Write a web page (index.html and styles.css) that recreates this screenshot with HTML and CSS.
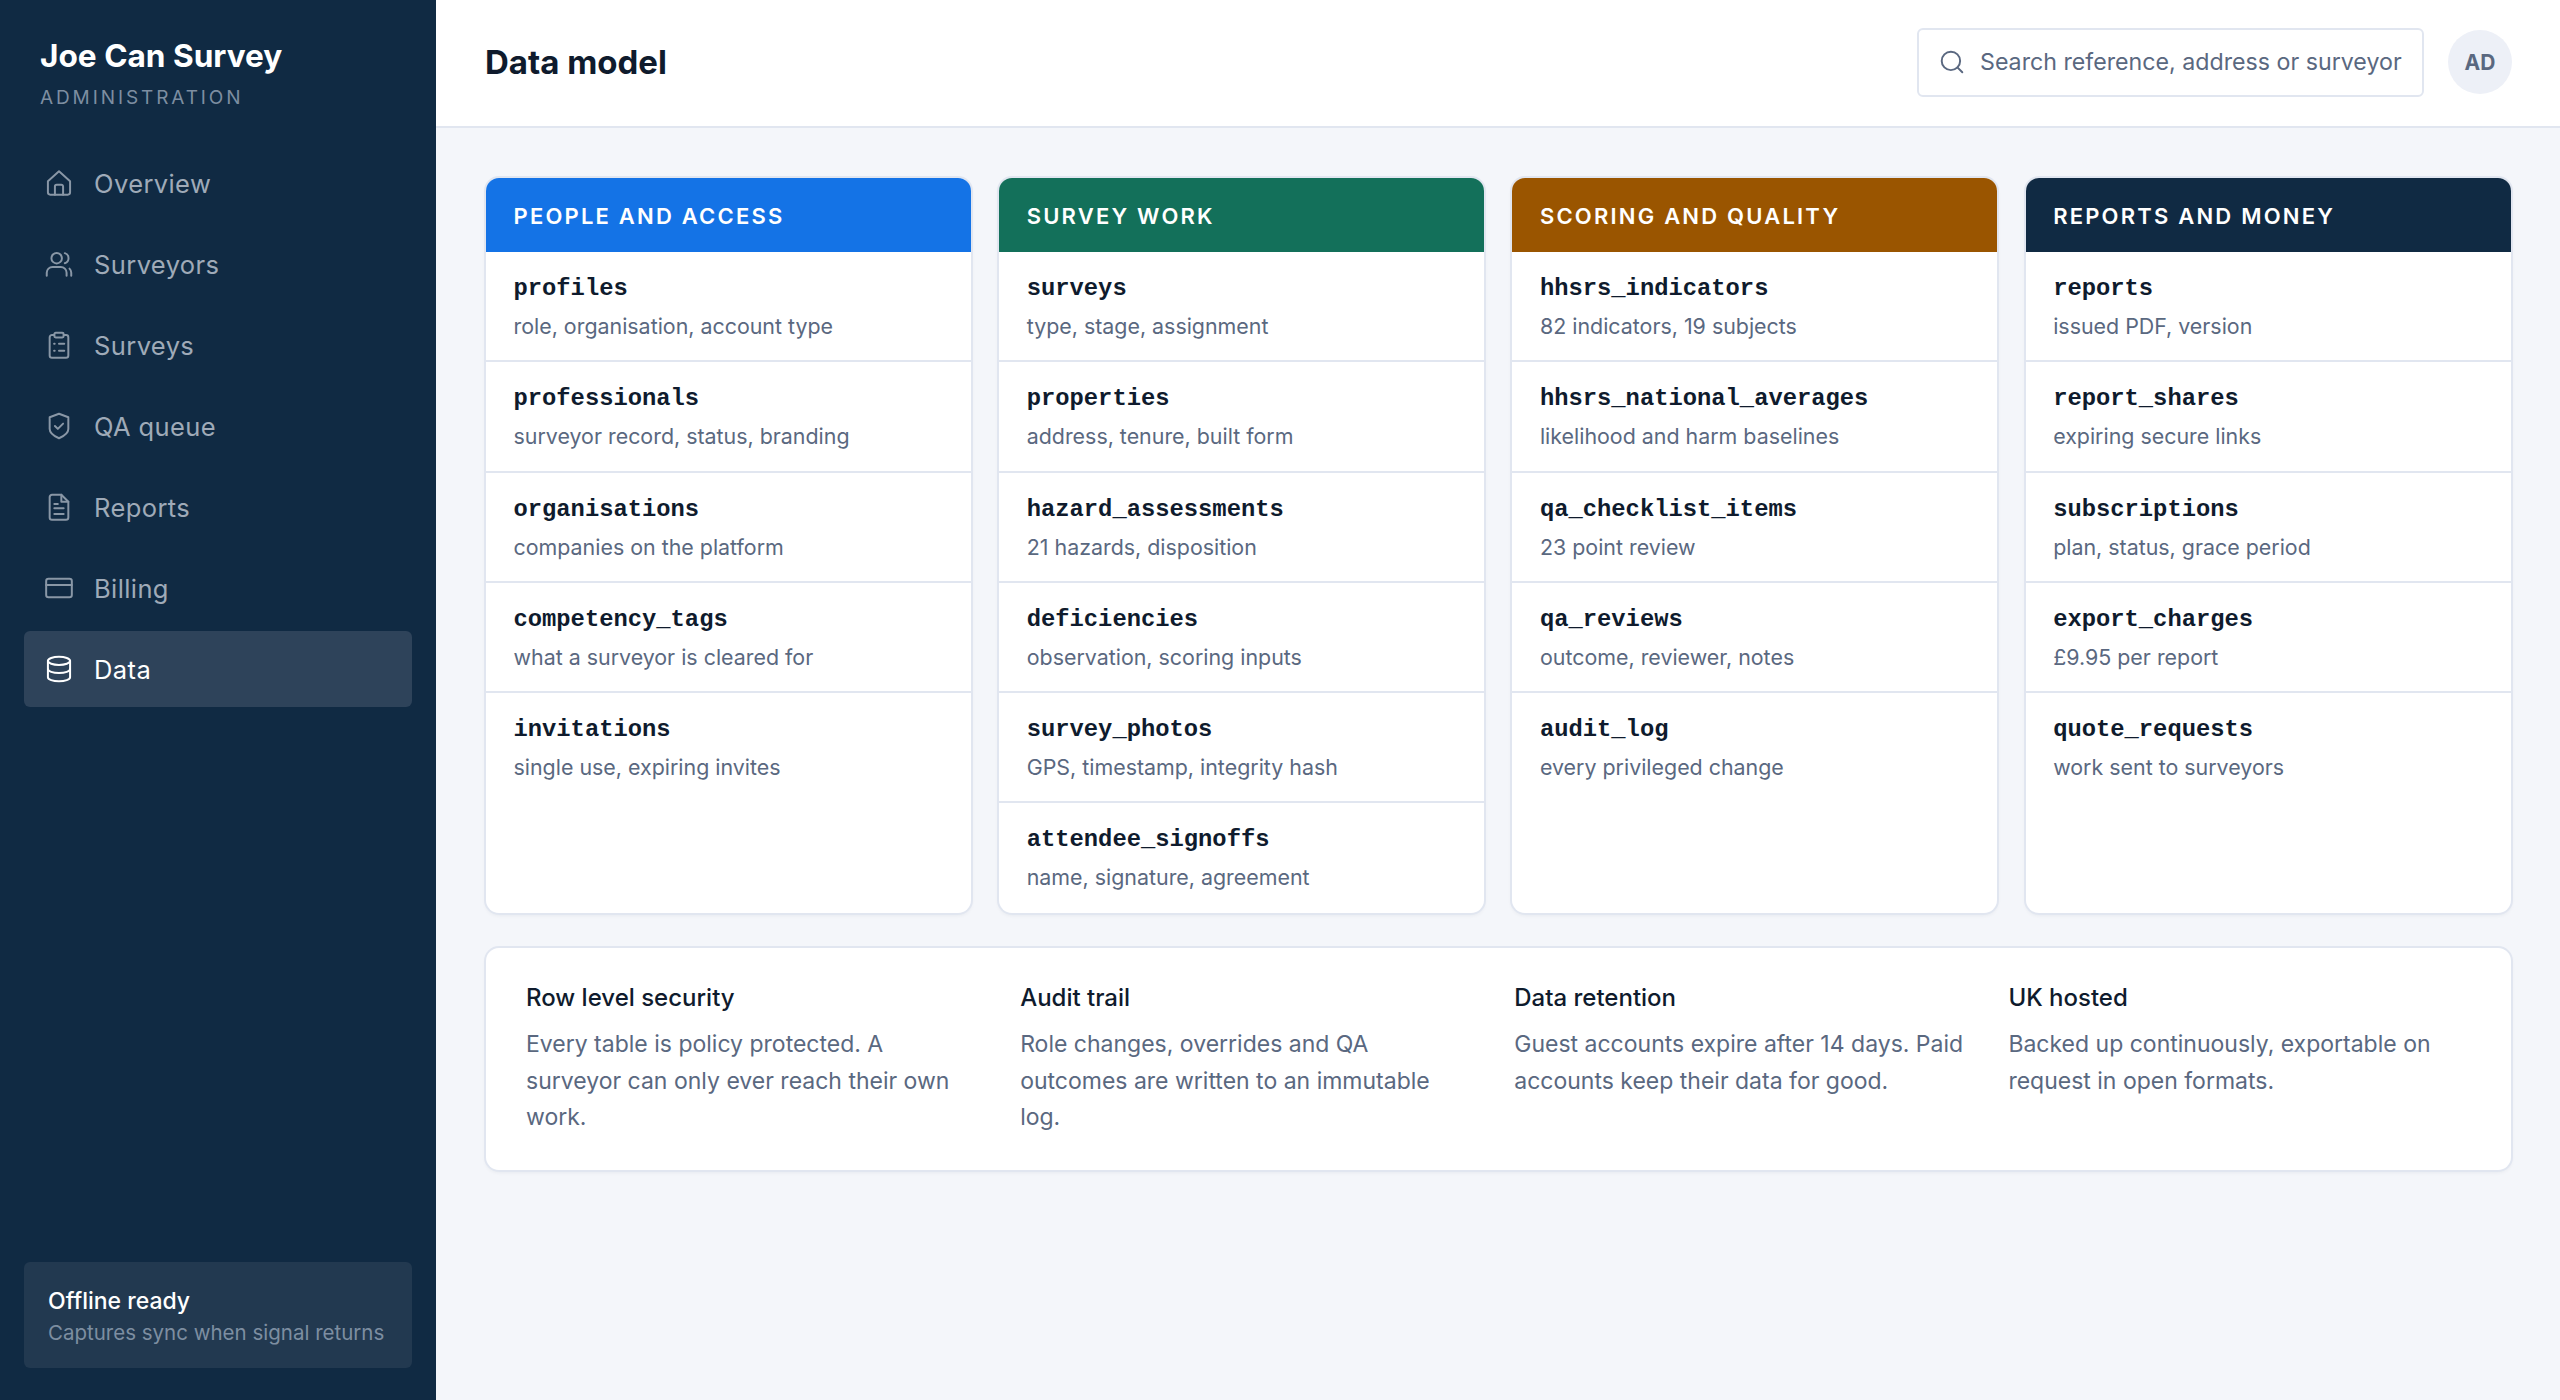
FILE: index.html
```html
<!DOCTYPE html>
<html lang="en">
<head>
    <meta charset="UTF-8">
    <title>Data model</title>
    <link rel="stylesheet" href="styles.css">
</head>
<body>
    <svg width="0" height="0" class="icon-defs">
        <symbol id="i-home" viewBox="0 0 24 24"><path d="M2.500 10.500 12 2l9.500 8.500V20a2 2 0 0 1-2 2h-15a2 2 0 0 1-2-2z"/><path d="M8.500 22v-7a1.500 1.500 0 0 1 1.500-1.500h4a1.500 1.500 0 0 1 1.500 1.500v7"/></symbol>
        <symbol id="i-users" viewBox="0 0 24 24"><circle cx="10" cy="7" r="4.500"/><path d="M1.500 22v-2.500a5 5 0 0 1 5-5h7a5 5 0 0 1 5 5V22"/><path d="M17 2.700a4.500 4.500 0 0 1 0 8.600"/><path d="M22.500 22v-2.500a5 5 0 0 0-1.500-3.500"/></symbol>
        <symbol id="i-clipboard" viewBox="0 0 24 24"><rect x="8" y="1.500" width="8" height="4" rx="1.200"/><path d="M16 3.500h2a2 2 0 0 1 2 2V21a2 2 0 0 1-2 2H6a2 2 0 0 1-2-2V5.500a2 2 0 0 1 2-2h2"/><path d="M12 11h4.500M12 17h4.500M7.800 11h.5M7.800 17h.5"/></symbol>
        <symbol id="i-shield" viewBox="0 0 24 24"><path d="M12 1.500 20 4.500v10c0 3-3.500 6-8 8-4.500-2-8-5-8-8v-10z"/><path d="m8.500 12 2.500 2.500 4.500-4.500"/></symbol>
        <symbol id="i-file" viewBox="0 0 24 24"><path d="M14 1.500H6a2 2 0 0 0-2 2V21a2 2 0 0 0 2 2h12a2 2 0 0 0 2-2V7.500z"/><path d="M14 1.500v6h6"/><path d="M8 13h8M8 18h8M8 9.500h3"/></symbol>
        <symbol id="i-card" viewBox="0 0 24 24"><rect x="1" y="4" width="22" height="16" rx="2"/><path d="M1 9.500h22"/></symbol>
        <symbol id="i-database" viewBox="0 0 24 24"><ellipse cx="12" cy="5" rx="9.500" ry="3.500"/><path d="M2.500 5v14c0 2 4.300 3.500 9.500 3.500s9.500-1.500 9.500-3.500V5"/><path d="M2.500 12c0 2 4.300 3.500 9.500 3.500s9.500-1.500 9.500-3.500"/></symbol>
        <symbol id="i-search" viewBox="0 0 24 24"><circle cx="11" cy="11" r="8.500"/><path d="m21.500 21.500-4.500-4.500"/></symbol>
    </svg>

    <div class="app">
        <!-- Sidebar -->
        <aside class="sidebar">
            <div class="brand">
                <div class="brand-name">Joe Can Survey</div>
                <div class="brand-sub">ADMINISTRATION</div>
            </div>
            <nav class="nav">
                <a class="nav-item"><svg class="icon"><use href="#i-home"/></svg>Overview</a>
                <a class="nav-item"><svg class="icon"><use href="#i-users"/></svg>Surveyors</a>
                <a class="nav-item"><svg class="icon"><use href="#i-clipboard"/></svg>Surveys</a>
                <a class="nav-item"><svg class="icon"><use href="#i-shield"/></svg>QA queue</a>
                <a class="nav-item"><svg class="icon"><use href="#i-file"/></svg>Reports</a>
                <a class="nav-item"><svg class="icon"><use href="#i-card"/></svg>Billing</a>
                <a class="nav-item active"><svg class="icon"><use href="#i-database"/></svg>Data</a>
            </nav>
            <div class="offline">
                <div class="offline-title">Offline ready</div>
                <div class="offline-sub">Captures sync when signal returns</div>
            </div>
        </aside>

        <div class="main">
            <!-- Top bar -->
            <header class="topbar">
                <h1>Data model</h1>
                <div class="topbar-right">
                    <div class="search">
                        <svg class="search-icon"><use href="#i-search"/></svg>
                        <span>Search reference, address or surveyor</span>
                    </div>
                    <div class="avatar">AD</div>
                </div>
            </header>

            <div class="content">
                <!-- Table groups -->
                <div class="groups">
                    <section class="group">
                        <h2 class="group-head blue">PEOPLE AND ACCESS</h2>
                        <div class="row"><code>profiles</code><p>role, organisation, account type</p></div>
                        <div class="row"><code>professionals</code><p>surveyor record, status, branding</p></div>
                        <div class="row"><code>organisations</code><p>companies on the platform</p></div>
                        <div class="row"><code>competency_tags</code><p>what a surveyor is cleared for</p></div>
                        <div class="row"><code>invitations</code><p>single use, expiring invites</p></div>
                    </section>
                    <section class="group">
                        <h2 class="group-head green">SURVEY WORK</h2>
                        <div class="row"><code>surveys</code><p>type, stage, assignment</p></div>
                        <div class="row"><code>properties</code><p>address, tenure, built form</p></div>
                        <div class="row"><code>hazard_assessments</code><p>21 hazards, disposition</p></div>
                        <div class="row"><code>deficiencies</code><p>observation, scoring inputs</p></div>
                        <div class="row"><code>survey_photos</code><p>GPS, timestamp, integrity hash</p></div>
                        <div class="row"><code>attendee_signoffs</code><p>name, signature, agreement</p></div>
                    </section>
                    <section class="group">
                        <h2 class="group-head amber">SCORING AND QUALITY</h2>
                        <div class="row"><code>hhsrs_indicators</code><p>82 indicators, 19 subjects</p></div>
                        <div class="row"><code>hhsrs_national_averages</code><p>likelihood and harm baselines</p></div>
                        <div class="row"><code>qa_checklist_items</code><p>23 point review</p></div>
                        <div class="row"><code>qa_reviews</code><p>outcome, reviewer, notes</p></div>
                        <div class="row"><code>audit_log</code><p>every privileged change</p></div>
                    </section>
                    <section class="group">
                        <h2 class="group-head navy">REPORTS AND MONEY</h2>
                        <div class="row"><code>reports</code><p>issued PDF, version</p></div>
                        <div class="row"><code>report_shares</code><p>expiring secure links</p></div>
                        <div class="row"><code>subscriptions</code><p>plan, status, grace period</p></div>
                        <div class="row"><code>export_charges</code><p>£9.95 per report</p></div>
                        <div class="row"><code>quote_requests</code><p>work sent to surveyors</p></div>
                    </section>
                </div>

                <!-- Notes -->
                <div class="notes">
                    <div class="note">
                        <h3>Row level security</h3>
                        <p>Every table is policy protected. A surveyor can only ever reach their own work.</p>
                    </div>
                    <div class="note">
                        <h3>Audit trail</h3>
                        <p>Role changes, overrides and QA outcomes are written to an immutable log.</p>
                    </div>
                    <div class="note">
                        <h3>Data retention</h3>
                        <p>Guest accounts expire after 14 days. Paid accounts keep their data for good.</p>
                    </div>
                    <div class="note">
                        <h3>UK hosted</h3>
                        <p>Backed up continuously, exportable on request in open formats.</p>
                    </div>
                </div>
            </div>
        </div>
    </div>
</body>
</html>
```

FILE: styles.css
```css
* {
    box-sizing: border-box;
}
html, body {
    height: 100%;
}
body {
    margin: 0;
    font-family: Inter, "Noto Sans", sans-serif;
    background-color: #f4f6fa;
    color: #0f1b2d;
}
.icon-defs {
    position: absolute;
}
.app {
    display: flex;
    height: 1400px;
}

/* Sidebar */
.sidebar {
    width: 436px;
    flex: none;
    background-color: #102a43;
    display: flex;
    flex-direction: column;
    padding: 0 24px 32px;
}
.brand {
    padding: 37px 16px 0;
    height: 145px;
}
.brand-name {
    font-size: 31.600px;
    font-weight: 700;
    line-height: 38px;
    color: #fff;
}
.brand-sub {
    margin-top: 11px;
    font-size: 19px;
    line-height: 24px;
    letter-spacing: 2.900px;
    color: #7d8ea1;
}
.nav {
    display: flex;
    flex-direction: column;
    gap: 5px;
}
.nav-item {
    display: flex;
    align-items: center;
    gap: 21px;
    height: 76px;
    padding-left: 21px;
    border-radius: 6px;
    font-size: 25.500px;
    letter-spacing: 0.400px;
    color: #9faab8;
}
.nav-item.active {
    background-color: #2e435a;
    color: #fff;
}
.icon {
    width: 28px;
    height: 28px;
    fill: none;
    stroke: currentColor;
    stroke-width: 1.700;
    stroke-linecap: round;
    stroke-linejoin: round;
    opacity: 0.850;
}
.nav-item.active .icon {
    opacity: 1;
}
.offline {
    margin-top: auto;
    height: 106px;
    padding: 24px;
    background-color: #223950;
    border-radius: 6px;
}
.offline-title {
    font-size: 23px;
    font-weight: 550;
    line-height: 30px;
    color: #fff;
}
.offline-sub {
    margin-top: 3px;
    font-size: 20.500px;
    line-height: 28px;
    color: #7d8ea1;
    white-space: nowrap;
}

/* Top bar */
.main {
    flex: 1;
    min-width: 0;
}
.topbar {
    height: 128px;
    padding: 0 48px 2px 49px;
    background-color: #fff;
    border-bottom: 2px solid #e1e6f0;
    display: flex;
    align-items: center;
    justify-content: space-between;
}
h1 {
    margin: 0;
    font-size: 33px;
    font-weight: 700;
    color: #0f1b2d;
}
.topbar-right {
    display: flex;
    align-items: center;
    gap: 24px;
}
.search {
    width: 507px;
    height: 69px;
    padding-left: 20px;
    background-color: #fff;
    border: 2px solid #e1e6f0;
    border-radius: 6px;
    display: flex;
    align-items: center;
    gap: 15px;
    font-size: 23.200px;
    color: #5a6880;
    white-space: nowrap;
}
.search-icon {
    width: 26px;
    height: 26px;
    flex: none;
    fill: none;
    stroke: currentColor;
    stroke-width: 1.800;
    stroke-linecap: round;
}
.avatar {
    width: 64px;
    height: 64px;
    border-radius: 50%;
    background-color: #edf0f7;
    color: #5a6880;
    font-size: 21px;
    font-weight: 700;
    display: flex;
    align-items: center;
    justify-content: center;
}

/* Table groups */
.content {
    padding: 50px 49.500px 0 50px;
}
.groups {
    display: grid;
    grid-template-columns: repeat(4, 1fr);
    gap: 28.400px;
}
.group {
    background-color: #fff;
    border-radius: 13px;
    box-shadow: 0 0 0 2px #e1e6f0, 0 2px 4px rgba(16, 42, 67, 0.080);
    overflow: hidden;
}
.group-head {
    margin: 0;
    height: 74px;
    padding: 2px 27.500px 0;
    display: flex;
    align-items: center;
    font-size: 22px;
    font-weight: 600;
    letter-spacing: 2.200px;
    color: #fff;
}
.blue { background-color: #1473e6; }
.green { background-color: #13705a; }
.amber { background-color: #9a5500; }
.navy { background-color: #102a43; }
.row {
    height: 110.300px;
    padding: 19px 27.500px 0;
    border-bottom: 2px solid #e1e6f0;
}
.row:last-child {
    height: 109.500px;
    border-bottom: none;
}
.row code {
    display: block;
    font-family: "Liberation Mono", monospace;
    font-size: 23.800px;
    font-weight: 700;
    line-height: 36px;
    color: #0f1b2d;
}
.row p {
    margin: 2px 0 0;
    font-size: 21.400px;
    line-height: 34px;
    color: #5a6880;
}

/* Notes */
.notes {
    margin-top: 35px;
    padding: 33px 50px 34px 40px;
    background-color: #fff;
    border-radius: 13px;
    box-shadow: 0 0 0 2px #e1e6f0, 0 2px 4px rgba(16, 42, 67, 0.080);
    display: grid;
    grid-template-columns: repeat(4, 1fr);
    gap: 42px;
}
.note h3 {
    margin: 0;
    font-size: 24px;
    font-weight: 550;
    line-height: 34px;
    color: #0f1b2d;
}
.note p {
    margin: 11px 0 0;
    font-size: 23px;
    line-height: 36.700px;
    color: #5a6880;
}
```
